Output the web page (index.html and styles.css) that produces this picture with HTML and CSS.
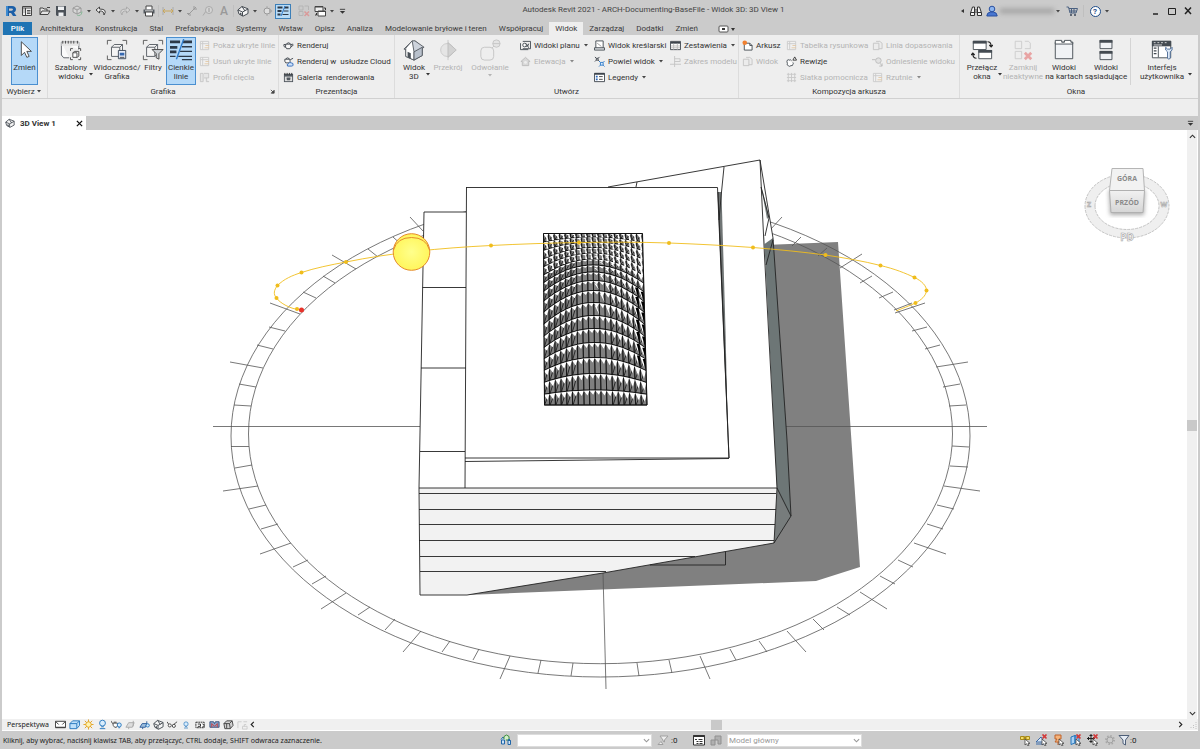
FILE: index.html
```html
<!DOCTYPE html>
<html lang="pl">
<head>
<meta charset="utf-8">
<title>Autodesk Revit 2021 - ARCH-Documenting-BaseFile</title>
<link rel="stylesheet" href="styles.css">
</head>
<body>
<svg class="sprite" aria-hidden="true">
  <symbol id="r" viewBox="0 0 12 12"><path d="M1 1h6q4 0 4 3.500 0 2-2 3l2.500 3.500H8L6 8H4v3H1z" fill="#1b5fa8"/><path d="M4 3.500h2.500q1.500 0 1.500 1t-1.500 1.200H4z" fill="#cbcbcb"/><path d="M1 1h2v10H1z" fill="#3d8ad0"/></symbol>
  <symbol id="home" viewBox="0 0 12 12"><path d="M1.500 1.500h9v9h-9z" fill="#eee" stroke="#444"/><path d="M1.500 3h9M4.500 3v7.500" stroke="#444"/><path d="M6 5.500h3.500M6 7h3.500M6 8.500h3.500M2.500 5h1M2.500 7h1" stroke="#555"/></symbol>
  <symbol id="open" viewBox="0 0 12 12"><path d="M1 9.500V3h3l1 1h3v2M1 9.500L3 6h8L9 9.500z" fill="#e4e4e4" stroke="#444"/><path d="M8 2.500h3" stroke="#444"/></symbol>
  <symbol id="save" viewBox="0 0 12 12"><path d="M1 1h10v10H2L1 10z" fill="#4b5158"/><path d="M3 1.500h6v3.500H3zM3.500 7.500h5V11h-5z" fill="#eef0f2"/></symbol>
  <symbol id="sync" viewBox="0 0 12 12"><path d="M6 1l4 2v4L6 9 2 7V3zM2 3l4 2 4-2M6 5v4" fill="#d7d7d7" stroke="#9a9a9a"/><path d="M6 10q4 2 5-3M9.500 8L11 6.500" fill="none" stroke="#8bb99a"/></symbol>
  <symbol id="undo" viewBox="0 0 12 12"><path d="M4.500 2L1 5l3.500 3V6Q9 5.500 9 10q4-6-4.500-6z" fill="#f2f2f2" stroke="#444"/></symbol>
  <symbol id="redo" viewBox="0 0 12 12"><path d="M7.500 2L11 5 7.500 8V6Q3 5.500 3 10q-4-6 4.500-6z" fill="#d4d4d4" stroke="#aaa"/></symbol>
  <symbol id="print" viewBox="0 0 12 12"><path d="M3 4.500V1h6v3.500" fill="#fff" stroke="#444"/><path d="M.5 4.500h11v4H.5z" fill="#555b61"/><path d="M2.500 7h7v4h-7z" fill="#fff" stroke="#444"/><path d="M2 5.800h8" stroke="#ccc"/></symbol>
  <symbol id="dim" viewBox="0 0 12 12"><path d="M1 2v8M11 2v8" stroke="#aaa"/><path d="M1 6h10M3 4L1 6l2 2M9 4l2 2-2 2" fill="none" stroke="#c9a75a"/></symbol>
  <symbol id="align" viewBox="0 0 12 12"><path d="M2 10L10 2M1 8.500h3V11M8 1v3h3" fill="none" stroke="#9a9a9a"/></symbol>
  <symbol id="tag" viewBox="0 0 12 12"><path d="M1 10.500L4 6" stroke="#aaa"/><circle cx="7" cy="5" r="3.500" fill="#d5d5d5" stroke="#aaa"/><path d="M7 3v4" stroke="#999"/></symbol>
  <symbol id="cube" viewBox="0 0 12 12"><path d="M.8 5L5 1.500l6 2.300V8.500L6 11.200 2 9z" fill="#f4f4f4" stroke="#454b52"/><path d="M1 5l4.500 2L11 4M5.500 7v4M5 1.500L8 6" fill="none" stroke="#454b52"/><path d="M3 7.500l1.500.7v2L3 9.500z" fill="#454b52"/></symbol>
  <symbol id="section" viewBox="0 0 12 12"><path d="M6 1v10" stroke="#aaa"/><circle cx="6" cy="6" r="3" fill="#ddd" stroke="#999"/><path d="M8 2.500L11.500 6 8 9.500z" fill="#aaa"/></symbol>
  <symbol id="thin" viewBox="0 0 12 12"><path d="M.5 2.500h5M7 2.500h4.500" stroke="#2d3948" stroke-width="2"/><path d="M.5 6h4M.5 9.500h3" stroke="#2d3948" stroke-width="2"/><path d="M6.500 6h5M5.500 9.500h6" stroke="#2d3948"/><path d="M8 1L4 11" stroke="#2f7ccc"/></symbol>
  <symbol id="closewin" viewBox="0 0 12 12"><path d="M1 1h4v4H1zM1 6.500h4v4H1zM6.500 1h4v4" fill="none" stroke="#b5b5b5"/><path d="M6.500 6.500l4.500 4.500M11 6.500L6.500 11" stroke="#d99a9a" stroke-width="1.500"/></symbol>
  <symbol id="switch" viewBox="0 0 12 12"><path d="M1 1.500h8v5H1z" fill="#eee" stroke="#444"/><path d="M4 6h7.500v5H4z" fill="#fff" stroke="#444"/><path d="M1 2h8M4 6.500h7.500" stroke="#444"/><path d="M10 3h1.500v2M2.500 8v2H1" fill="none" stroke="#333"/></symbol>
  <symbol id="bino" viewBox="0 0 12 12"><path d="M2.500 2h2v3h3V2h2l2 6v2.500H7.500V7h-3v3.500H.500V8z" fill="#f4f4f4" stroke="#333"/><path d="M4.500 2v5M7.500 2v5M1 7.500h3M8 7.500h3" stroke="#333"/></symbol>
  <symbol id="user" viewBox="0 0 12 12"><circle cx="6" cy="4" r="2.800" fill="#8cb4ee" stroke="#2a50a0"/><path d="M.8 11q0-3.500 3.700-4h3q3.700.5 3.700 4z" fill="#4876d0" stroke="#2a50a0"/></symbol>
  <symbol id="cart" viewBox="0 0 12 12"><path d="M.5 2H2.500L4 8h6l1.500-4.500H3M4 6h6.500M5.500 3.500V8M8 3.500V8" fill="none" stroke="#4a6080"/><circle cx="5" cy="10" r="1" fill="#3a4658"/><circle cx="9" cy="10" r="1" fill="#3a4658"/></symbol>
  <symbol id="caret" viewBox="0 0 6 6"><path d="M1 2h4L3 4.500z" fill="currentColor"/></symbol>
  <symbol id="chev" viewBox="0 0 8 8"><path d="M1 2.500l3 3 3-3" fill="none" stroke="currentColor" stroke-width="1.300"/></symbol>
  <symbol id="arrow" viewBox="0 0 24 24"><path d="M8 3v15l3.500-3.500L14 20l2.500-1-2.500-5.500h5z" fill="#fff" stroke="#444"/></symbol>
  <symbol id="templates" viewBox="0 0 24 24"><path d="M1.500 3.500h19v8M10 20.500H4l-2.500-3v-14" fill="#fbfbfb" stroke="#555b61"/><path d="M1.500 3.500h19v4h-19z" fill="#e5e5e5"/><path d="M3 2v3M6 2v3M9 2v3M12 2v3M15 2v3M19 2v3" stroke="#444"/><path d="M11.500 13v-2.500H14M20 10.500h2.500V13M11.500 20v2.500H14M20 22.500h2.500V20M14 15l2-1.500h4.500v5l-1.500 1.500h-5zM14 15h4.500v5" fill="#fff" stroke="#444"/></symbol>
  <symbol id="vg" viewBox="0 0 24 24"><path d="M1.500 6V1.500H6M18 1.500h4.500V6M1.500 18v4.500H6" fill="none" stroke="#555"/><path d="M6 9l3-3h9v10l-3 3H6z" fill="#f4f4f4" stroke="#555b61"/><path d="M6 9h9v10M15 9l3-3" fill="none" stroke="#555b61"/><path d="M13.500 12.500h8v9h-8z" fill="#e9eef8" stroke="#3a4658"/><path d="M15 15h5v3h-5z" fill="#3568b0"/><path d="M15 20h5" stroke="#444"/></symbol>
  <symbol id="filters" viewBox="0 0 24 24"><path d="M1.500 6V1.500H6M18 1.500h4.500V6M1.500 18v4.500H6" fill="none" stroke="#555"/><path d="M5 9l3-3h9v10l-3 3H5z" fill="#f4f4f4" stroke="#555b61"/><path d="M5 9h9v10M14 9l3-3" fill="none" stroke="#555b61"/><path d="M11 11.500h12L18.500 16v6l-3-1.500V16z" fill="#cfd3d7" stroke="#444"/></symbol>
  <symbol id="thinbig" viewBox="0 0 24 24"><path d="M0 3h11M14 3h10M0 9h8M0 14h7" stroke="#2d3948" stroke-width="3"/><path d="M13 8.500h11M11 13.500h13M0 19h6M9 19h15M13 22.500h11" stroke="#2d3948" stroke-width="1.500"/><path d="M15 0L7 22" stroke="#2f7ccc" stroke-width="1.500"/></symbol>
  <symbol id="house3d" viewBox="0 0 24 24"><path d="M3 11v8l9 4 9-5V9l-8-7z" fill="#f8f8f8" stroke="#555b61"/><path d="M1 11L10 2l3 0 10 7-11 6z" fill="#cdd3dc" stroke="#555b61"/><path d="M10 2L3 10v9l9 4v-9z" fill="#fff" stroke="#555b61"/><path d="M5 14l3.500 1.500v6L5 20z" fill="#4a5158"/><path d="M12 14v9l9-5V9z" fill="#b9c1cc" stroke="#555b61"/></symbol>
  <symbol id="sectionbig" viewBox="0 0 24 24"><path d="M12 1v22" stroke="#c5c5c5"/><circle cx="11" cy="12" r="7" fill="#e5e5e5" stroke="#c9c9c9"/><path d="M12 4l9 8-9 8z" fill="#d2d2d2" stroke="#bbb"/></symbol>
  <symbol id="callout" viewBox="0 0 24 24"><rect x="2" y="9" width="14" height="14" rx="4" fill="none" stroke="#c4c4c4"/><path d="M14 10l3-3" stroke="#c4c4c4"/><circle cx="19" cy="5" r="4" fill="#e4e4e4" stroke="#c4c4c4"/><path d="M15 5h8" stroke="#c4c4c4"/></symbol>
  <symbol id="doc" viewBox="0 0 12 12"><path d="M1.500 1.500h9v9h-9z" fill="#f1f1f1" stroke="#ccc"/><path d="M1.500 4h9M4 1.500v9" stroke="#ccc"/><path d="M6 8.500h5M7 6h4" stroke="#e2c9a8"/></symbol>
  <symbol id="profile" viewBox="0 0 12 12"><path d="M1.500 1.500h3v9h-3zM5.500 1.500h5v5h-5M8 6.500v4h3" fill="#e5e5e5" stroke="#c6c6c6"/></symbol>
  <symbol id="teapot" viewBox="0 0 12 12"><path d="M3 4.500h5.500q1 3.500-1 5H4Q2 8 3 4.500zM8.500 5l2.500-.5M8.500 7.500l3-2M3 5Q0 4 1 6.500t2 1M4 4q2-2 4 0" fill="#f8f8f8" stroke="#3d444c"/></symbol>
  <symbol id="cloud" viewBox="0 0 12 12"><path d="M2 3.500h5.500q1 3-1 4H3Q1.500 6 2 3.500zM8 4l3-1.500M3 3q2-2 4 0" fill="#f8f8f8" stroke="#3d444c"/><path d="M5 11q-1.500-2 1-2.500 1-2.500 3-1 2.500 0 2 2.500-.3 1-1.500 1z" fill="#cfe2fa" stroke="#2c66b8"/></symbol>
  <symbol id="gallery" viewBox="0 0 12 12"><path d="M1 2h10v9H1z" fill="#525960"/><path d="M2 5h8v5H2z" fill="#ddd"/><path d="M4 6h4q.5 2-.5 3h-3Q3.500 8 4 6z" fill="#525960"/><path d="M2 1v2M4.500 1v2M7 1v2M9.500 1v2" stroke="#333"/></symbol>
  <symbol id="plan" viewBox="0 0 12 12"><path d="M3 1.500h8.500v8H3M.5 3.500v7H9" fill="none" stroke="#444b52"/><circle cx="5" cy="5.500" r="2" fill="#fff" stroke="#444b52"/><path d="M6.500 7q3 0 3-3M7 4l2.500 4.500" fill="none" stroke="#444b52"/></symbol>
  <symbol id="elev" viewBox="0 0 12 12"><path d="M1 6l5-4.500L11 6H9.500v4.500h-7V6z" fill="#d8d8d8" stroke="#bbb"/><circle cx="6" cy="7" r="1.500" fill="#eee"/></symbol>
  <symbol id="draft" viewBox="0 0 12 12"><path d="M2 1h8v8H2z" fill="#fff" stroke="#444b52"/><path d="M3.500 3.500L8 7" stroke="#999"/><path d="M.5 8.500h11v2.500H.5z" fill="#e6e9ec" stroke="#444b52"/></symbol>
  <symbol id="dup" viewBox="0 0 12 12"><path d="M1 1l1.500 1.500M6 1L4.500 2.500M1 6l1.500-1.500M4.500 4.500L6 6M2.500 2.500h2v2h-2z" fill="none" stroke="#3d444c"/><path d="M5.500 5.500L7 7M11.500 5.500L10 7M5.500 11.500L7 10M11.500 11.500L10 10M7 7h3v3H7z" fill="#dcebfb" stroke="#2c7ccc"/></symbol>
  <symbol id="legend" viewBox="0 0 12 12"><path d="M.5 1.500h11v9H.5z" fill="#fff" stroke="#3d444c"/><path d="M.5 2h11" stroke="#3d444c" stroke-width="2"/><path d="M2 4h2v2H2zM2 7h2v2H2z" fill="#2c66b8"/><path d="M5.500 5h4M5.500 8h4" stroke="#444"/></symbol>
  <symbol id="sched" viewBox="0 0 12 12"><path d="M.5 1.500h11v9H.5z" fill="#fff" stroke="#3d444c"/><path d="M1 2h10v2H1z" fill="#3d444c"/><path d="M4 4v6.500M8 4v6.500M1 6.500h10M1 8.500h10" stroke="#bbb"/></symbol>
  <symbol id="scope" viewBox="0 0 12 12"><path d="M5 0v12M0 9h12M5 3h6v3H5" fill="none" stroke="#c4c4c4"/></symbol>
  <symbol id="sheet" viewBox="0 0 12 12"><path d="M2.500 3.500h6L11 6v5H2.500z" fill="#fff" stroke="#444b52"/><path d="M8.500 3.500V6H11" fill="none" stroke="#444b52"/><circle cx="3" cy="3" r="2.500" fill="#f08030"/></symbol>
  <symbol id="sheetg" viewBox="0 0 12 12"><path d="M1.500 3.500h6v7h-6zM4.500 1.500h4l2.500 2v6H7.500" fill="#ececec" stroke="#c4c4c4"/></symbol>
  <symbol id="rev" viewBox="0 0 12 12"><path d="M1.500 4.500q1-1 2 0 1.500-1 2.500.5M7.500 7q1 1 0 2 0 2-2 1.500-2 1.500-3 0-2-.500-1-2.500-1-2 0-3.500" fill="#fff" stroke="#444b52"/><path d="M7.500 4.500L9.500 1l2 3.500z" fill="#fff" stroke="#333"/></symbol>
  <symbol id="grid" viewBox="0 0 12 12"><path d="M2.500 1v10M6 1v10M9.500 1v10M1 2.500h10M1 6h10M1 9.500h10" stroke="#c8c8c8"/></symbol>
  <symbol id="refer" viewBox="0 0 12 12"><path d="M0 4h4M9 8l2 3M11 8v3H8" fill="none" stroke="#bbb"/><circle cx="7" cy="5" r="3" fill="#e2e2e2" stroke="#bbb"/></symbol>
  <symbol id="swbig" viewBox="0 0 24 24"><path d="M2.500 2.500h14v9h-14z" fill="#fff" stroke="#444b52"/><path d="M2 3.500h15" stroke="#444b52" stroke-width="3"/><path d="M8.500 12.500h14v9h-14z" fill="#fff" stroke="#444b52"/><path d="M8 13.500h15" stroke="#444b52" stroke-width="3"/><path d="M18 3q4 0 4 5M20 6.500l2 2 2-2M6 21q-4 0-4-5M0 17.500l2-2 2 2" fill="none" stroke="#222" stroke-width="1.300"/></symbol>
  <symbol id="closeg" viewBox="0 0 24 24"><path d="M3.500 2.500h7v8h-7zM3.500 13.500h7v8h-7zM14 2.500h4l2 2v6h-6" fill="#ededed" stroke="#ccc"/><path d="M14 15l7 7M21 15l-7 7" stroke="#e8a4a4" stroke-width="3"/></symbol>
  <symbol id="tabsbig" viewBox="0 0 24 24"><path d="M2.500 3.500h19v18h-19z" fill="#f0f2f5" stroke="#444b52"/><path d="M2.500 1.500h7v2h3v-2h7v2h2v2h-19z" fill="#fff" stroke="#444b52"/></symbol>
  <symbol id="tilebig" viewBox="0 0 24 24"><path d="M5.500 1.500h13v9h-13zM5.500 13.500h13v9h-13z" fill="#f0f2f5" stroke="#444b52"/><path d="M5 2.500h14M5 14.500h14" stroke="#444b52" stroke-width="3"/></symbol>
  <symbol id="uibig" viewBox="0 0 24 24"><path d="M1.500 2.500h20v18h-20z" fill="#fff" stroke="#444b52"/><path d="M1 2h21v6H1z" fill="#444b52"/><path d="M3 4h2M7 4h2M11 4h2M15 4h2M3 6.500h9" stroke="#ddd"/><path d="M3 10h3M3 13h3M3 16h3" stroke="#444b52" stroke-width="1.500"/><path d="M8 8v12" stroke="#444b52"/><path d="M16 9v3l2 2v7q1.500 2 3 0v-7l2-2V9l-2 2h-3z" fill="#dce8f6" stroke="#4a6a96"/></symbol>
  <symbol id="scale" viewBox="0 0 12 12"><path d="M.5 2.500h11v7H.5z" fill="#fff" stroke="#333"/><path d="M1 3l3 3M11 3L8 6M1 9h10" stroke="#333"/></symbol>
  <symbol id="detail" viewBox="0 0 12 12"><path d="M1 5l3-3h7.500v5l-3 3.500H1z" fill="#bfe0fa" stroke="#2676bc"/><path d="M1 5h7.500v5M8.500 5l3-3" fill="none" stroke="#2676bc"/></symbol>
  <symbol id="sunny" viewBox="0 0 12 12"><path d="M6 0.500v11M.5 6h11M2 2l8 8M10 2l-8 8" stroke="#e0a020"/><circle cx="6" cy="6" r="3" fill="#fff3b0" stroke="#e0a020"/></symbol>
  <symbol id="bulb" viewBox="0 0 12 12"><circle cx="6" cy="4.500" r="3.200" fill="#d8ecfc" stroke="#2676bc"/><path d="M4.500 8.500h3M3 10.500h6" stroke="#2676bc"/></symbol>
  <symbol id="pot2" viewBox="0 0 12 12"><path d="M2 4.500h5q1 3-1 4.500H4Q2 7.500 2 4.500zM2 5Q0 3 0 2M3 3.500h3" fill="#fff" stroke="#444"/><circle cx="9" cy="6.500" r="2.200" fill="#d8ecfc" stroke="#2676bc"/><path d="M8 9.500h2" stroke="#2676bc"/></symbol>
  <symbol id="crop" viewBox="0 0 12 12"><path d="M1 9l3-5h6L8 9zM4 9v2M9 2v6" fill="#ddd" stroke="#aaa"/></symbol>
  <symbol id="cropb" viewBox="0 0 12 12"><path d="M1 9l2.500-4h5L7 9z" fill="#9cbede" stroke="#2c5b98"/><path d="M4 9v2M8.500 2.500V7" stroke="#2c5b98"/><circle cx="9.500" cy="7" r="1.800" fill="#d8ecfc" stroke="#2676bc"/></symbol>
  <symbol id="glasses" viewBox="0 0 12 12"><path d="M0 3l2 3M6 7l5-4" stroke="#444"/><circle cx="3" cy="7" r="1.700" fill="#fff" stroke="#444"/><circle cx="7.500" cy="7.500" r="1.700" fill="#fff" stroke="#444"/></symbol>
  <symbol id="model" viewBox="0 0 12 12"><path d="M1 3.500h9v6H1z" fill="#fff" stroke="#222" stroke-dasharray="2 .6"/><path d="M3 5.500h3v2.500H3M8 5l2 2-2 2" fill="none" stroke="#222"/></symbol>
  <symbol id="modelr" viewBox="0 0 12 12"><path d="M1 9V3h4l1 2 1-2h4v6z" fill="#8aa6cc" stroke="#334e7c"/><path d="M3 9V5l3 3 3-3v4" fill="none" stroke="#c93a3a"/></symbol>
  <symbol id="cubeg" viewBox="0 0 12 12"><path d="M1 5l3-3h6l1 5-3 3.500H2z" fill="#d0d0d0" stroke="#444"/><path d="M1 5h6l1 5.500M7 5l3-3M4 5v5" fill="none" stroke="#444"/></symbol>
  <symbol id="links" viewBox="0 0 12 12"><path d="M1.500 6v4h3V6zM1 5.500L3 3l2 2.500" fill="#cde4f8" stroke="#2166a8"/><path d="M4 5V2.500L6.500 1 9 2.500V6H6" fill="#d5f0cc" stroke="#3a8d3a"/><path d="M8 6.500v4h2.500v-4zM8 6.500l1-1.500 1.500 1.500" fill="#cde4f8" stroke="#2166a8"/></symbol>
  <symbol id="select" viewBox="0 0 12 12"><path d="M3 2h8L7.500 6v2L6 7V6zM1 10.500h5L4 7.500z" fill="#eee" stroke="#a0a0a0"/></symbol>
  <symbol id="wks" viewBox="0 0 12 12"><path d="M.5 1.500h11v9.500H.5z" fill="#fff" stroke="#333"/><path d="M.5 2h11" stroke="#333" stroke-width="2"/><path d="M2 5.500h2M5.500 5.500h4M3.500 7.500h2M6.500 7.500h3M3.500 9.500h2M6.500 9.500h3" stroke="#333"/></symbol>
  <symbol id="opt" viewBox="0 0 12 12"><path d="M1 6h4v5H1zM5 2h6v8H8V6H5z" fill="#b0b0b0" stroke="#909090"/></symbol>
  <symbol id="s1" viewBox="0 0 12 12"><path d="M1.500 2.500h4v3h-4zM6.500 2.500h4v3h-4z" fill="#f3dc6a" stroke="#a88a18"/><path d="M4 4h4" stroke="#a88a18"/></symbol>
  <symbol id="s2" viewBox="0 0 12 12"><path d="M0 8l5-5 3 5zM0 10h9" fill="#dbe9f8" stroke="#3b6aa8"/></symbol>
  <symbol id="s3" viewBox="0 0 12 12"><path d="M2 1h6v4H6l2 3H2l2-3H2zM5 8v3" fill="#f5b47c" stroke="#c0622a"/></symbol>
  <symbol id="s4" viewBox="0 0 12 12"><path d="M1 3l4-1.500V9L1 10.500zM5 1.500L9 3v6L5 9z" fill="#a9d2f5" stroke="#2676bc"/></symbol>
  <symbol id="s5" viewBox="0 0 12 12"><path d="M4 0v9M0 4.500h8M2.500 1.500h3M2.500 7.500h3M1.500 3v3M6.500 3v3" stroke="#222"/></symbol>
  <symbol id="x" viewBox="0 0 12 12"><path d="M6.500 .5l4 4M10.500 .5l-4 4" stroke="#d23b3b" stroke-width="1.700"/></symbol>
  <symbol id="ptr" viewBox="0 0 12 12"><path d="M6 5v6l1.500-1.300L9 12l1-.6-1-2h2z" fill="#fff" stroke="#444" stroke-width=".8"/></symbol>
  <symbol id="gear" viewBox="0 0 12 12"><circle cx="6" cy="6" r="4" fill="none" stroke="#a8a8a8" stroke-width="2" stroke-dasharray="1.500 1.600"/><circle cx="6" cy="6" r="3" fill="none" stroke="#a2a2a2"/></symbol>
  <symbol id="funnel" viewBox="0 0 12 12"><path d="M1 1.500h10L7.500 6v5L5 9.500V6z" fill="#e6ecf4" stroke="#4e5f78"/></symbol>
</svg>

<div class="app">
  <header class="titlebar">
    <div class="qat">
      <button class="q" aria-label="Revit"><svg><use href="#r"/></svg></button>
      <button class="q" aria-label="Start"><svg><use href="#home"/></svg></button>
      <button class="q lead" aria-label="Otwórz"><svg><use href="#open"/></svg></button>
      <button class="q" aria-label="Zapisz"><svg><use href="#save"/></svg></button>
      <button class="q" aria-label="Synchronizuj"><svg><use href="#sync"/></svg></button>
      <svg class="car"><use href="#caret"/></svg>
      <button class="q" aria-label="Cofnij"><svg><use href="#undo"/></svg></button>
      <svg class="car"><use href="#caret"/></svg>
      <button class="q" aria-label="Ponów"><svg><use href="#redo"/></svg></button>
      <svg class="car"><use href="#caret"/></svg>
      <button class="q" aria-label="Drukuj"><svg><use href="#print"/></svg></button>
      <span class="vsep"></span>
      <button class="q" aria-label="Wymiar"><svg><use href="#dim"/></svg></button>
      <svg class="car"><use href="#caret"/></svg>
      <button class="q" aria-label="Zmierz"><svg><use href="#align"/></svg></button>
      <button class="q" aria-label="Oznacz"><svg><use href="#tag"/></svg></button>
      <button class="q letter">A</button>
      <span class="vsep"></span>
      <button class="q" aria-label="Widok 3D"><svg><use href="#cube"/></svg></button>
      <svg class="car"><use href="#caret"/></svg>
      <button class="q" aria-label="Przekrój"><svg><use href="#section"/></svg></button>
      <button class="q on" aria-label="Cienkie linie"><svg><use href="#thin"/></svg></button>
      <button class="q gap" aria-label="Zamknij nieaktywne"><svg><use href="#closewin"/></svg></button>
      <button class="q" aria-label="Przełącz okna"><svg><use href="#switch"/></svg></button>
      <svg class="car"><use href="#caret"/></svg>
      <button class="q narrow" aria-label="Dostosuj"><svg viewBox="0 0 8 8"><path d="M1 1.500h6" stroke="#333"/><path d="M1 3.500h6L4 6.500z" fill="#333"/></svg></button>
    </div>
    <h1 class="title">Autodesk Revit 2021 - ARCH-Documenting-BaseFile - Widok 3D: 3D View 1</h1>
    <div class="account">
      <svg class="tri" viewBox="0 0 6 6"><path d="M4 1v4L1 3z" fill="#333"/></svg>
      <button class="q" aria-label="Szukaj"><svg><use href="#bino"/></svg></button>
      <button class="q" aria-label="Konto"><svg><use href="#user"/></svg></button>
      <span class="username"></span>
      <svg class="car"><use href="#caret"/></svg>
      <button class="q cart" aria-label="Sklep"><svg><use href="#cart"/></svg></button>
      <span class="vsep"></span>
      <button class="q help" aria-label="Pomoc"><span>?</span></button>
      <svg class="car"><use href="#caret"/></svg>
    </div>
    <div class="winbtns">
      <button class="q" aria-label="Minimalizuj"><svg viewBox="0 0 12 12"><path d="M3 9h5" stroke="#222" stroke-width="1.500"/></svg></button>
      <button class="q" aria-label="Maksymalizuj"><svg viewBox="0 0 12 12"><path d="M2.500 3.500h7v6h-7z" fill="none" stroke="#222"/></svg></button>
      <button class="q" aria-label="Zamknij"><svg viewBox="0 0 12 12"><path d="M3 2.500l6 6.500M9 2.500L3 9" stroke="#222" stroke-width="1.500"/></svg></button>
    </div>
  </header>

  <nav class="tabs">
    <button class="tab file">Plik</button>
    <button class="tab">Architektura</button>
    <button class="tab">Konstrukcja</button>
    <button class="tab">Stal</button>
    <button class="tab">Prefabrykacja</button>
    <button class="tab">Systemy</button>
    <button class="tab">Wstaw</button>
    <button class="tab">Opisz</button>
    <button class="tab">Analiza</button>
    <button class="tab">Modelowanie bryłowe i teren</button>
    <button class="tab">Współpracuj</button>
    <button class="tab active">Widok</button>
    <button class="tab">Zarządzaj</button>
    <button class="tab">Dodatki</button>
    <button class="tab">Zmień</button>
    <button class="tab cycle" aria-label="Tryb wstążki"><svg viewBox="0 0 18 8"><rect x="1" y="1" width="9" height="6" rx="1" fill="#fff" stroke="#555"/><path d="M4 3h3v2H4z" fill="#333"/><path d="M13 3h4l-2 3z" fill="#333"/></svg></button>
  </nav>

  <section class="ribbon">
    <div class="panel p-select">
      <div class="tools"><button class="big on"><svg><use href="#arrow"/></svg><span>Zmień</span></button></div>
      <div class="cap">Wybierz <svg class="car"><use href="#caret"/></svg></div>
    </div>
    <div class="panel p-graphics">
      <div class="tools">
        <button class="big w46"><svg><use href="#templates"/></svg><span>Szablony<br>widoku</span><svg class="dd"><use href="#caret"/></svg></button>
        <button class="big w46"><svg><use href="#vg"/></svg><span>Widoczność/<br>Grafika</span></button>
        <button class="big w26"><svg><use href="#filters"/></svg><span>Filtry</span></button>
        <button class="big w30 on"><svg><use href="#thinbig"/></svg><span>Cienkie<br>linie</span></button>
        <div class="col off">
          <button><svg><use href="#doc"/></svg>Pokaż ukryte linie</button>
          <button><svg><use href="#doc"/></svg>Usuń ukryte linie</button>
          <button><svg><use href="#profile"/></svg>Profil cięcia</button>
        </div>
      </div>
      <div class="cap">Grafika<svg class="launch" viewBox="0 0 6 6"><path d="M1 1l3 3M5 1.500V5H1.500z" stroke="#444" fill="#444"/></svg></div>
    </div>
    <div class="panel p-present">
      <div class="tools">
        <div class="col">
          <button><svg><use href="#teapot"/></svg>Renderuj</button>
          <button><svg><use href="#cloud"/></svg>Renderuj w&nbsp; usłudze Cloud</button>
          <button><svg><use href="#gallery"/></svg>Galeria&nbsp; renderowania</button>
        </div>
      </div>
      <div class="cap">Prezentacja</div>
    </div>
    <div class="panel p-create">
      <div class="tools">
        <button class="big w34"><svg><use href="#house3d"/></svg><span>Widok<br>3D</span><svg class="dd"><use href="#caret"/></svg></button>
        <button class="big w34 off"><svg><use href="#sectionbig"/></svg><span>Przekrój</span></button>
        <button class="big w50 off"><svg><use href="#callout"/></svg><span>Odwołanie</span><svg class="under"><use href="#caret"/></svg></button>
        <div class="col c-plan">
          <button><svg><use href="#plan"/></svg>Widoki planu<svg class="car"><use href="#caret"/></svg></button>
          <button class="off"><svg><use href="#elev"/></svg>Elewacja<svg class="car"><use href="#caret"/></svg></button>
        </div>
        <div class="col c-draft">
          <button><svg><use href="#draft"/></svg>Widok kreślarski</button>
          <button><svg><use href="#dup"/></svg>Powiel widok<svg class="car"><use href="#caret"/></svg></button>
          <button><svg><use href="#legend"/></svg>Legendy<svg class="car"><use href="#caret"/></svg></button>
        </div>
        <div class="col">
          <button><svg><use href="#sched"/></svg>Zestawienia<svg class="car"><use href="#caret"/></svg></button>
          <button class="off"><svg><use href="#scope"/></svg>Zakres modelu</button>
        </div>
      </div>
      <div class="cap">Utwórz</div>
    </div>
    <div class="panel p-sheet">
      <div class="tools">
        <div class="col c-sheet">
          <button><svg><use href="#sheet"/></svg>Arkusz</button>
          <button class="off"><svg><use href="#sheetg"/></svg>Widok</button>
        </div>
        <div class="col c-title">
          <button class="off"><svg><use href="#doc"/></svg>Tabelka rysunkowa</button>
          <button><svg><use href="#rev"/></svg>Rewizje</button>
          <button class="off"><svg><use href="#grid"/></svg>Siatka pomocnicza</button>
        </div>
        <div class="col off">
          <button><svg><use href="#sheetg"/></svg>Linia dopasowania</button>
          <button><svg><use href="#refer"/></svg>Odniesienie widoku</button>
          <button><svg><use href="#doc"/></svg>Rzutnie<svg class="car"><use href="#caret"/></svg></button>
        </div>
      </div>
      <div class="cap">Kompozycja arkusza</div>
    </div>
    <div class="panel p-windows">
      <div class="tools">
        <button class="big w42"><svg><use href="#swbig"/></svg><span>Przełącz<br>okna</span><svg class="dd"><use href="#caret"/></svg></button>
        <button class="big w40 off"><svg><use href="#closeg"/></svg><span>Zamknij<br>nieaktywne</span></button>
        <button class="big w42"><svg><use href="#tabsbig"/></svg><span>Widoki<br>na kartach</span></button>
        <button class="big w42"><svg><use href="#tilebig"/></svg><span>Widoki<br>sąsiadujące</span></button>
        <span class="psep"></span>
        <button class="big w62"><svg><use href="#uibig"/></svg><span>Interfejs<br>użytkownika</span><svg class="dd"><use href="#caret"/></svg></button>
      </div>
      <div class="cap">Okna</div>
    </div>
  </section>
  <div class="options"></div>

  <div class="doctabs">
    <div class="doctab"><svg class="cube"><use href="#cube"/></svg><span>3D View 1</span><button aria-label="Zamknij widok"><svg viewBox="0 0 8 8"><path d="M1 1l6 6M7 1L1 7" stroke="#111" stroke-width="1.500"/></svg></button></div>
    <button class="tabmenu" aria-label="Lista widoków"><svg viewBox="0 0 8 8"><path d="M1 1.500h6" stroke="#333"/><path d="M1 3.500h6L4 6.500z" fill="#333"/></svg></button>
  </div>

  <main class="work">
    <div class="view">
      <svg class="scene" viewBox="2 130 1185 589" role="img" aria-label="Widok 3D budynku">
        <path d="M765 245L838 242 860 567 816 581 467 595 600 560 765 500z" fill="#808080"/>
        <g class="ring">
          <ellipse cx="600.500" cy="436" rx="369.500" ry="241"/>
          <ellipse cx="600.500" cy="434" rx="352" ry="229.700"/>
          <path d="M410 217L423 231M393 237L404 247M368 249L378 257M332 255L356 269M323 276L335 283M303 292L316 298M270 303L300 314M269 327L285 331M257 345L273 349M230 362L263 368M239 384L256 387M234 405L251 406M213 426.500H420M231 446.500H249M235 468L252 465M223 491L258 486M249 509L266 505M261 529L278 524M260 554L291 543M293 567L308 560M312 584L326 576M321 609L346 593M358 615L370 607M385 630L395 619M403 652L421 631M442 652L450 641M473 660L479 649M500 679L510 656M538 673L541 660M571 676L573 663M603 573L606 689"/>
          <path d="M952 446L969 447M950 466L968 467M944 486L980 491M937 505L954 509M927 524L943 529M914 543L946 554M898 560L913 567M880 576L895 584M860 592L887 609M837 607L850 615M813 619L824 630M787 631L806 652M759 641L767 652M730 649L736 660M700 656L710 679M669 660L672 673M637 663L639 676M770 230L782 217M792 246L801 237M818 256L827 248M840 268L862 254M860 283L872 276M879 298L893 292M895 313L925 303M894 310L912 303M912 331L927 327M925 349L940 345M936 367L968 362M943 387L960 384M949 406L966 405M773 426.500H987"/>
        </g>
        <path d="M424 212H466V187H608L760 160 766 236 777 488H419z" fill="#fff"/>
        <path d="M764 236L773 238 787 440 791 516 774 543 777 488z" fill="#6d7676"/>
        <path d="M777 488L791 516 774 543z" fill="#777c7c"/>
        <path d="M760 160L773 238 764.500 244z" fill="#fff"/>
        <path d="M761 186L763 192 769 217 767 219z" fill="#78807f"/>
        <path d="M419 488H777L774 543 603 573 467 595H420z" fill="#f2f2f2"/>
        <path d="M718 192H721.500L725.500 330 728 440z" fill="#707575"/>
        <g class="edges">
          <path d="M466 212H424L419 488 420 595H467L603 573 774 543 777 488H419M422.500 287.500H466M421 368H466M420 451.500H465M466.500 187L465 488M466 187.500H717.500L729 458H465M465 461.500L729 458.500M608 187L760 160 764.500 256 777 488M636 187L637 182M724 167L721.500 192 719 220M718 192L729 458M760 160L773 238 787 440 791 516 774 543M777 488L791 516M761 187L769 218 765 236M773 240L766 265M419 493.500H776M419 509.500H776M419 524.500H775M419 540.500H774M420 556.500H695M420 571.500H606M650 565H725.500V552"/>
        </g>
        <g class="facade" clip-path="url(#panelclip)"></g>
        <clipPath id="panelclip"><path d="M543 233H643L648 406H544z"/></clipPath>
        <path class="frame" d="M543.500 233.500H642.500L647 405H544.500z"/>
        <path class="sunpath" d="M301 310C290 309 280 303 276.500 298C273 294 274 290 277.500 285.500C284 279 292 275.500 301.500 272.500C315 268 330 265 346 262C390 253 440 248 491 245.500C520 244 550 243 579 242.500C609 242 640 242 669 243C697 244 725 245.500 753 247.500C778 249.500 803 252 825.500 255C845 258 863 261 880.500 265.500C895 269 905 273 914.500 277.500C922 281 926.500 286 926.500 290.500C926 296 921 300 915.500 303C909 306 903 308 896 311"/>
        <g fill="#f0bd1c"><circle cx="297" cy="309" r="2"/><circle cx="276.500" cy="298" r="2"/><circle cx="277.500" cy="285.500" r="2"/><circle cx="301.500" cy="272.500" r="2"/><circle cx="346" cy="262" r="2"/><circle cx="491" cy="245.500" r="2"/><circle cx="579" cy="242.500" r="2"/><circle cx="669" cy="243" r="2"/><circle cx="753" cy="247.500" r="2"/><circle cx="825.500" cy="255" r="2"/><circle cx="880.500" cy="265.500" r="2"/><circle cx="914.500" cy="277.500" r="2"/><circle cx="926.500" cy="290.500" r="2"/><circle cx="915.500" cy="303" r="2"/></g>
        <circle cx="301.500" cy="310" r="2.500" fill="#e8322a"/>
        <defs><radialGradient id="sung"><stop offset="0" stop-color="#ffff8c"/><stop offset="1" stop-color="#fff65c"/></radialGradient></defs>
        <circle cx="411.500" cy="252" r="18.300" fill="url(#sung)" stroke="#e58a2c"/>
        <path d="M393.500 250Q397 237.500 411.500 237.500T429.500 250" fill="none" stroke="#e58a2c"/>
      </svg>
      <svg class="viewcube" viewBox="1080 160 94 88" role="img" aria-label="ViewCube">
        <defs>
          <linearGradient id="face" x2="0" y2="1"><stop offset="0" stop-color="#f1f1f1"/><stop offset="1" stop-color="#d6d6d6"/></linearGradient>
          <filter id="soft"><feGaussianBlur stdDeviation="2"/></filter>
        </defs>
        <path fill-rule="evenodd" d="M1085 206a42 32 0 1 0 84 0a42 32 0 1 0-84 0zM1095 206a32 23.500 0 1 0 64 0a32 23.500 0 1 0-64 0z" fill="#efefef" stroke="#c4c4c4" stroke-dasharray="3 1"/>
        <path d="M1109 190H1145L1144 215H1110z" fill="#aaa" filter="url(#soft)"/>
        <path d="M1112 168.500H1143L1144.500 190.500H1109.500z" fill="#f2f2f2" stroke="#b5b5b5"/>
        <path d="M1109.500 190.500H1144.500L1143 212.500H1111z" fill="url(#face)" stroke="#b0b0b0"/>
        <text x="1127" y="181">GÓRA</text>
        <text x="1127" y="205">PRZÓD</text>
        <g class="compass"><text x="1089" y="207">Z</text><text x="1164" y="207">W</text><text class="south" x="1127" y="241">PD</text></g>
      </svg>
    </div>
    <div class="vscroll"><svg><use href="#chev"/></svg><span class="thumb"></span><svg><use href="#chev"/></svg></div>
  </main>

  <div class="viewbar">
    <span class="persp">Perspektywa</span>
    <button aria-label="Skala"><svg><use href="#scale"/></svg></button>
    <button aria-label="Styl wyświetlania"><svg><use href="#detail"/></svg></button>
    <button aria-label="Ścieżka słońca"><svg><use href="#sunny"/></svg></button>
    <button aria-label="Cienie"><svg><use href="#bulb"/></svg></button>
    <button aria-label="Rendering"><svg><use href="#pot2"/></svg></button>
    <button aria-label="Przytnij widok"><svg><use href="#crop"/></svg></button>
    <button aria-label="Obszar przycięcia"><svg><use href="#cropb"/></svg></button>
    <button aria-label="Zablokuj widok"><svg><use href="#cube"/></svg></button>
    <button aria-label="Ukryj tymczasowo"><svg><use href="#glasses"/></svg></button>
    <button aria-label="Pokaż ukryte"><svg class="tiny"><use href="#bulb"/></svg></button>
    <button aria-label="Właściwości widoku"><svg><use href="#model"/></svg></button>
    <button aria-label="Model analityczny"><svg><use href="#modelr"/></svg></button>
    <button aria-label="Zestawy przemieszczeń"><svg><use href="#cubeg"/></svg></button>
    <button aria-label="Wiązania"><svg viewBox="0 0 12 12"><path d="M1 3v7M1 3h4M7 3h4M6 8h5v3H6zM8 8V6h2" fill="none" stroke="#ccc"/></svg></button>
    <svg class="left"><use href="#chev"/></svg>
    <span class="htrack"><span class="thumb"></span></span>
    <svg class="right"><use href="#chev"/></svg>
    <svg class="grip" viewBox="0 0 10 10"><path d="M8 2v7M5.500 5v4M3 7v2" stroke="#c2c2c2" stroke-dasharray="1 1"/></svg>
  </div>

  <footer class="status">
    <span class="hint">Kliknij, aby wybrać, naciśnij klawisz TAB, aby przełączyć, CTRL dodaje, SHIFT odwraca zaznaczenie.</span>
    <svg class="ic"><use href="#links"/></svg>
    <span class="combo"><select aria-label="Zestaw zadań"><option></option></select><svg><use href="#chev"/></svg></span>
    <svg class="ic"><use href="#select"/></svg><span class="count">:0</span>
    <svg class="ic"><use href="#wks"/></svg>
    <svg class="ic"><use href="#opt"/></svg>
    <span class="combo"><select aria-label="Opcja projektowa"><option>Model główny</option></select><svg><use href="#chev"/></svg></span>
    <div class="toggles">
      <button aria-label="Wybierz połączenia"><svg><use href="#s1"/><use href="#ptr"/></svg></button>
      <button aria-label="Wybierz podkłady"><svg><use href="#s2"/><use href="#x"/><use href="#ptr"/></svg></button>
      <button aria-label="Wybierz przypięte"><svg><use href="#s3"/><use href="#ptr"/></svg></button>
      <button aria-label="Wybierz według powierzchni"><svg><use href="#s4"/><use href="#x"/><use href="#ptr"/></svg></button>
      <button aria-label="Przeciągnij przy wyborze"><svg><use href="#s5"/><use href="#x"/><use href="#ptr"/></svg></button>
      <button aria-label="Procesy w tle"><svg><use href="#gear"/></svg></button>
      <button class="filter"><svg><use href="#funnel"/></svg>:0</button>
    </div>
  </footer>
</div>
<script src="facade.js"></script>
</body>
</html>
```
FILE: styles.css
```css
* { box-sizing: border-box; }
html, body { height: 100%; margin: 0; }
body { font: 8px/9px Roboto, "Noto Sans", sans-serif; color: #333; overflow: hidden; }
button { font: inherit; color: inherit; background: none; border: 0; padding: 0; margin: 0; white-space: nowrap; }
svg { flex: none; overflow: visible; }
.sprite { position: absolute; width: 0; height: 0; }

.app { height: 100vh; display: flex; flex-direction: column; background: #cbcbcb; padding: 0 2px; }

.titlebar { flex: none; height: 22px; display: flex; align-items: center; position: relative; padding: 0 2px 0 1px; }
.qat, .account, .winbtns { display: flex; align-items: center; }
.q { width: 16px; height: 15px; display: flex; align-items: center; justify-content: center; }
.q svg { width: 12px; height: 12px; }
.q.lead { margin-left: 2px; }
.q.gap { margin-left: 5px; }
.q.on { border: 1px solid #3c7fb8; background: #b9dcf7; }
.q.narrow { width: 12px; }
.q.narrow svg { width: 7px; height: 7px; }
.q.letter { font-size: 12px; font-weight: 500; color: #999; }
.car { width: 8px; height: 6px; color: #444; }
.vsep { width: 1px; height: 12px; margin: 0 1px; background: #bfbfbf; }
.title { position: absolute; inset: 5px 0 auto 107px; margin: 0; text-align: center; font-size: 8px; line-height: 9px; font-weight: 400; color: #444; pointer-events: none; }
.account { margin-left: auto; }
.tri { width: 6px; height: 6px; margin-right: 2px; }
.username { width: 54px; height: 6px; background: #aaa; filter: blur(2px); }
.cart { margin: 0 2px; }
.help { margin-left: 2px; }
.help span { width: 11px; height: 11px; border: 1px solid #1f4c88; border-radius: 50%; background: #fff; color: #1f4c88; font-weight: 700; line-height: 9px; text-align: center; }
.winbtns { margin-left: 37px; }

.tabs { flex: none; height: 13px; display: flex; padding-left: 1px; }
.tab { padding: 0 6px; color: #3a3a3a; }
.tab.file { width: 29px; margin-right: 2px; background: #1f74b4; color: #fff; font-weight: 500; }
.tab.active { background: #eee; }
.tab.cycle { padding-left: 14px; }
.tab svg { width: 18px; height: 8px; display: block; }

.ribbon { flex: none; height: 64px; display: flex; background: #eee; border-bottom: 1px solid #d0d0d0; }
.panel { flex: none; display: flex; flex-direction: column; padding-top: 2px; border-right: 1px solid #dcdcdc; }
.panel:last-child { flex: 1; border-right: 0; }
.p-select { width: 46px; }
.p-graphics { width: 231px; }
.p-present { width: 116px; }
.p-create { width: 344px; }
.p-sheet { width: 221px; }
.tools { height: 48px; display: flex; }
.p-select .tools { padding-left: 9px; }
.p-present .tools { padding-left: 4px; }
.p-create .tools { padding-left: 2px; }
.p-sheet .tools { padding-left: 3px; }
.p-windows .tools { padding-left: 1px; }
.cap { height: 12px; display: flex; align-items: center; justify-content: center; color: #333; position: relative; }
.p-windows .cap { padding-right: 6px; }
.launch { position: absolute; right: 3px; width: 5px; height: 5px; }

.big { position: relative; display: flex; flex-direction: column; align-items: center; justify-content: flex-start; padding-top: 2px; }
.big > svg:first-child { width: 22px; height: 22px; margin-bottom: 2px; }
.big.on { border: 1px solid #4a8fd0; background: #b5d9f8; padding-top: 1px; }
.p-select .big { width: 27px; }
.w26 { width: 26px; } .w30 { width: 30px; } .w34 { width: 34px; } .w40 { width: 40px; }
.w42 { width: 42px; } .w46 { width: 46px; } .w50 { width: 50px; } .w62 { width: 62px; }
.dd { position: absolute; right: 0; bottom: 8px; width: 6px; height: 6px; }
.under { width: 6px; height: 6px; }
.off { color: #b4b4b4; }
.off .car { color: #888; }
.psep { width: 1px; margin: 1px 0 0 3px; background: #d4d4d4; }

.col { display: flex; flex-direction: column; align-items: flex-start; }
.big + .col { margin-left: 3px; }
.big + .c-plan { margin-left: 5px; }
.col button { height: 16px; display: flex; align-items: center; }
.col button > svg:first-child { width: 11px; height: 11px; margin-right: 3px; }
.col .car { margin-left: 3px; width: 6px; }
.c-plan { width: 74px; }
.c-draft { width: 76px; }
.c-sheet { width: 44px; }
.c-title { width: 86px; }

.options { flex: none; height: 17px; background: #eee; }
.doctabs { flex: none; height: 14px; display: flex; justify-content: space-between; background: #c9c9c9; }
.doctab { width: 84px; display: flex; align-items: center; padding: 0 3px; background: #fff; font-weight: 700; color: #333; }
.doctab .cube { width: 10px; height: 10px; margin-right: 5px; }
.doctab button { margin-left: auto; }
.doctab button svg, .tabmenu svg { display: block; width: 7px; height: 7px; }
.tabmenu { margin-right: 4px; }

.work { flex: 1; min-height: 0; display: flex; background: #fff; }
.view { flex: 1; min-width: 0; position: relative; }
.scene { display: block; width: 100%; height: 100%; }
.ring { fill: none; stroke: #555; stroke-width: .8; }
.edges { fill: none; stroke: #222; stroke-width: .9; }
.frame { fill: none; stroke: #111; }
.sunpath { fill: none; stroke: #f0bd1c; stroke-width: .9; }
.viewcube { position: absolute; top: 30px; right: 13px; width: 94px; height: 88px; }
.viewcube text { font: 700 7px "Open Sans", sans-serif; fill: #8a8a8a; text-anchor: middle; }
.viewcube .compass text { fill: #fff; stroke: #a4a4a4; stroke-width: .6; }
.viewcube .compass .south { font-size: 10px; }

.vscroll { flex: none; width: 11px; display: flex; flex-direction: column; align-items: center; justify-content: space-between; background: #f0f0f0; padding: 3px 0 2px; border-right: 1px solid #fff; }
.vscroll svg { width: 7px; height: 7px; }
.vscroll svg:first-child { transform: rotate(180deg); }
.thumb { display: block; background: #c9c9c9; }
.vscroll .thumb { width: 10px; height: 11px; }

.viewbar { flex: none; height: 12px; display: flex; align-items: center; background: #f0f0f0; border-bottom: 1px solid #fff; color: #222; }
.persp { width: 51px; padding-left: 5px; font: 7px/9px "Noto Sans", sans-serif; }
.viewbar button { width: 14px; height: 11px; display: grid; place-items: center; }
.viewbar button svg { width: 11px; height: 11px; }
.viewbar button svg.tiny { width: 8px; height: 8px; }
.viewbar > svg { width: 7px; height: 7px; }
.viewbar .left { transform: rotate(90deg); }
.viewbar .right { transform: rotate(-90deg); margin-right: 4px; }
.viewbar .grip { width: 10px; height: 10px; }
.htrack { flex: 1; }
.htrack .thumb { width: 11px; height: 10px; margin: 0 auto; }

.status { flex: none; height: 18px; display: flex; align-items: center; color: #222; }
.hint { width: 498px; padding-left: 1px; white-space: nowrap; font: 7px/9px "Noto Sans", sans-serif; }
.ic { width: 12px; height: 12px; margin-right: 5px; }
.combo { position: relative; display: flex; width: 135px; height: 13px; margin-right: 5px; }
.combo select { width: 100%; appearance: none; border: 1px solid #ddd; border-radius: 0; background: #fff; font: inherit; color: #999; padding: 0 1px; }
.combo svg { position: absolute; right: 2px; top: 3px; width: 7px; height: 7px; color: #999; }
.ic + .count { width: 18px; margin-left: -3px; margin-right: 4px; }
.toggles { margin-left: auto; display: flex; margin-right: 58px; }
.toggles button { width: 17px; height: 14px; display: grid; place-items: center; }
.toggles svg { width: 12px; height: 12px; }
.toggles .filter { width: 22px; display: flex; align-items: center; }
```
FILE: facade.js
```js
// Builds the curved louvre panel on the roof as a grid of folded cells.
(function () {
  var group = document.querySelector('.facade');
  var ns = 'http://www.w3.org/2000/svg';
  var cols = 18;
  var rows = [233, 237, 242, 247.5, 253, 259, 265, 272, 280.5, 290.5, 302.5, 315.5, 328.5, 342.5, 357.5, 373.5, 390, 405];

  function left(y) { return 543 + (y - 233) / 172; }
  function right(y) { return 642 + 5 * (y - 233) / 172; }
  function point(c, r) {
    var u = c / cols;
    var base = rows[r];
    var t = (base - 233) / 172;
    var bulge = 22 * Math.sin(Math.PI * Math.pow(t, 0.7));
    var y = base + bulge * Math.pow(2 * u - 1, 2);
    return [left(y) + (right(y) - left(y)) * u, y];
  }
  function add(d, fill, stroke, width) {
    var p = document.createElementNS(ns, 'path');
    p.setAttribute('d', d);
    p.setAttribute('fill', fill);
    p.setAttribute('stroke', stroke);
    p.setAttribute('stroke-width', width);
    group.appendChild(p);
  }
  function xy(p) { return p[0].toFixed(1) + ' ' + p[1].toFixed(1); }

  var cells = '', light = '', folds = '', shade = '';
  for (var r = 0; r < rows.length - 1; r++) {
    for (var c = 0; c < cols; c++) {
      var a = point(c, r), b = point(c + 1, r), d = point(c, r + 1), e = point(c + 1, r + 1);
      var side = Math.abs((c + 0.5) / cols * 2 - 1);
      var h = d[1] - a[1];
      var drop = h * (0.3 + 0.35 * side);
      cells += 'M' + xy(a) + 'L' + xy(b) + 'L' + xy(e) + 'L' + xy(d) + 'z';
      light += 'M' + xy([a[0], a[1] + 0.5]) + 'L' + xy([b[0], b[1] + 0.5]) + 'L' + xy([b[0] - 2, b[1] + drop]) + 'z';
      if (r < 5) light += 'M' + xy([b[0] - 2, b[1]]) + 'L' + xy(e) + 'L' + xy([b[0] - 2, e[1]]) + 'z';
      if (r > 3 && r < 11 && c > 8 && c < 16 && (r + c) % 2) {
        light += 'M' + xy([a[0] + 1, a[1] + 3]) + 'L' + xy([a[0] + 3, a[1] + 3]) + 'L' + xy([b[0], e[1] - 1]) + 'z';
      }
      if (side > 0.3) folds += 'M' + xy([b[0] - 0.5, b[1]]) + 'L' + xy([d[0] + 0.5, d[1]]);
      if (c > 15 && r > 6 && r < 14) shade += 'M' + xy([b[0] - 3, b[1]]) + 'L' + xy(b) + 'L' + xy(e) + 'z';
    }
  }
  add(cells, '#808080', 'none', 0);
  add(cells, 'none', '#111', 0.8);
  add(folds, 'none', '#111', 0.8);
  add(light, '#fff', 'none', 0);
  add(shade, '#000', 'none', 0);
})();
```
